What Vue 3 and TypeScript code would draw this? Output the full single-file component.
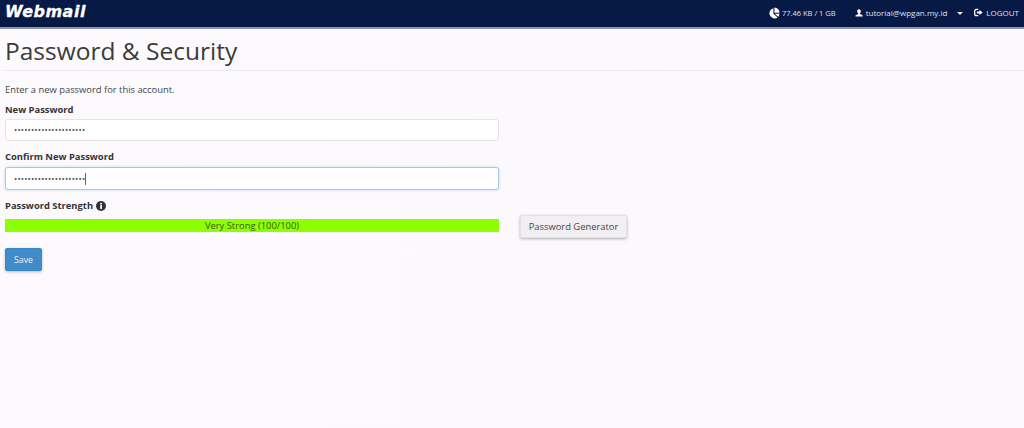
<script setup lang="ts">
const dots = '•'.repeat(21);
</script>

<template>
  <div class="page">
    <header class="topbar">
      <span class="logo">Webmail</span>
      <nav class="tools">
        <span class="tool quota">
          <svg class="ico pie" viewBox="0 0 16 16"><path d="M7.2 1.5v7.6l5.6 5A7 7 0 1 1 7.2 1.5z" fill="#fff"/><path d="M8.6 0.6a7 7 0 0 1 6.8 6.9H8.6z" fill="#fff"/><path d="M9 9h6.4a7 7 0 0 1-1.8 4z" fill="#fff"/></svg>
          77.46 KB / 1 GB
        </span>
        <span class="tool user">
          <svg class="ico" viewBox="0 0 14 14"><path d="M7 0.5c2 0 3.2 1.5 3.2 3.6 0 1.6-.7 3-1.7 3.7v1.1l4 1.6c.6.3.9.7.9 1.300V13H1v-1.200c0-.6.3-1 .9-1.300l4-1.600V7.800C4.800 7.100 3.800 5.700 3.800 4.100 3.800 2 5 .5 7 .5z" fill="#fff"/></svg>
          tutorial@wpgan.my.id
        </span>
        <span class="caret"></span>
        <span class="tool logout">
          <svg class="ico" viewBox="0 0 14 14"><path d="M6.500 2H4a3 3 0 0 0-3 3v4a3 3 0 0 0 3 3h2.500" fill="none" stroke="#fff" stroke-width="2"/><path d="M4.500 5.600h4V3l5 4-5 4V8.400h-4z" fill="#fff"/></svg>
          LOGOUT
        </span>
      </nav>
    </header>

    <main class="content">
      <h1 class="title">Password &amp; Security</h1>
      <p class="intro">Enter a new password for this account.</p>

      <label class="label first">New Password</label>
      <div class="input">{{ dots }}</div>

      <label class="label second">Confirm New Password</label>
      <div class="input focused">{{ dots }}<span class="cursor"></span></div>

      <div class="label third">
        Password Strength
        <svg class="info" viewBox="0 0 12 12"><circle cx="6" cy="6" r="6" fill="#333"/><rect x="5" y="5" width="2.200" height="4.500" fill="#fff"/><rect x="5" y="2.300" width="2.200" height="1.800" fill="#fff"/></svg>
      </div>
      <div class="strength-row">
        <div class="meter">Very Strong (100/100)</div>
        <button class="gen" type="button">Password Generator</button>
      </div>

      <button class="save" type="button">Save</button>
    </main>
  </div>
</template>

<style>
html, body { margin: 0; padding: 0; }
</style>

<style scoped>
.page {
  width: 1024px;
  height: 428px;
  overflow: hidden;
  background: linear-gradient(90deg, #fdfafd 0%, #fcf9fd 60%, #fbf8fe 100%);
  font-family: "Open Sans", "Liberation Sans", sans-serif;
  color: #333;
}
.topbar {
  height: 27px;
  background: #071a45;
  border-bottom: 2px solid #8d93a8;
  display: flex;
  align-items: center;
  justify-content: space-between;
  box-sizing: content-box;
}
.logo {
  margin-left: 5px;
  font-family: "DejaVu Sans", sans-serif;
  font-weight: 700;
  font-style: italic;
  font-size: 16px;
  letter-spacing: 0.500px;
  line-height: 18px;
  color: #fff;
  margin-top: -4px;
  -webkit-text-stroke: 0.300px #fff;
}
.tools {
  display: flex;
  align-items: center;
  color: #dfe3ec;
  font-size: 8px;
  margin-right: 5px;
  margin-top: -2px;
}
.tool { display: flex; align-items: center; gap: 3px; white-space: nowrap; }
.ico { width: 8px; height: 8px; display: block; }
.pie { width: 12px; height: 12px; margin-right: 0; }
.quota { margin-right: 19px; font-size: 7.500px; gap: 2px; }
.user { gap: 3px; }
.logout .ico { width: 9px; height: 9px; }
.caret {
  width: 0;
  height: 0;
  margin: 1px 11px 0 10px;
  border-left: 3px solid transparent;
  border-right: 3px solid transparent;
  border-top: 3px solid #dfe3ec;
}
.content { padding: 0 0 0 5px; }
.title {
  margin: 0;
  width: 1019px;
  height: 42px;
  box-sizing: border-box;
  padding-top: 5px;
  border-bottom: 1px solid #ebe8ec;
  font-size: 24.500px;
  line-height: 34px;
  font-weight: 400;
  color: #3a3a3a;
}
.intro {
  margin: 12px 0 0;
  font-size: 9.400px;
  line-height: 14px;
  color: #444;
}
.label {
  display: block;
  font-size: 9.400px;
  font-weight: 700;
  line-height: 14px;
  color: #333;
}
.first { margin-top: 6px; }
.second { margin-top: 9px; }
.third { margin-top: 9px; display: flex; align-items: center; gap: 3px; }
.input {
  width: 494px;
  height: 22px;
  margin-top: 2px;
  box-sizing: border-box;
  padding-left: 8px;
  background: #fff;
  border: 1px solid #e6e4e6;
  border-radius: 3px;
  font-size: 8.500px;
  line-height: 20px;
  letter-spacing: 0.200px;
  color: #555;
  display: flex;
  align-items: center;
}
.focused {
  height: 23px;
  margin-top: 3px;
  border-color: #9ccbe6;
  box-shadow: 0 0 3px rgba(120, 190, 230, 0.500);
}
.cursor { width: 1px; height: 12px; background: #666; }
.info { width: 10px; height: 10px; display: block; }
.strength-row { display: flex; align-items: flex-start; margin-top: 6px; }
.meter {
  width: 494px;
  height: 13px;
  background: #8cff00;
  font-size: 9.400px;
  line-height: 13px;
  text-align: center;
  color: #3b5a14;
}
.gen {
  margin: -4px 0 0 21px;
  width: 107px;
  height: 23px;
  padding: 0;
  border: 1px solid #e4e1e4;
  border-radius: 2px;
  background: #f1eff1;
  box-shadow: 0 1px 3px rgba(0, 0, 0, 0.300);
  font-family: inherit;
  font-size: 9.400px;
  color: #444;
}
.save {
  display: block;
  margin-top: 10px;
  width: 37px;
  height: 23px;
  padding: 0;
  border: 1px solid #3a85c4;
  border-radius: 2px;
  background: #408ccb;
  box-shadow: 0 1px 3px rgba(0, 0, 0, 0.250);
  font-family: inherit;
  font-size: 8.800px;
  color: #e8f2fa;
}
</style>
